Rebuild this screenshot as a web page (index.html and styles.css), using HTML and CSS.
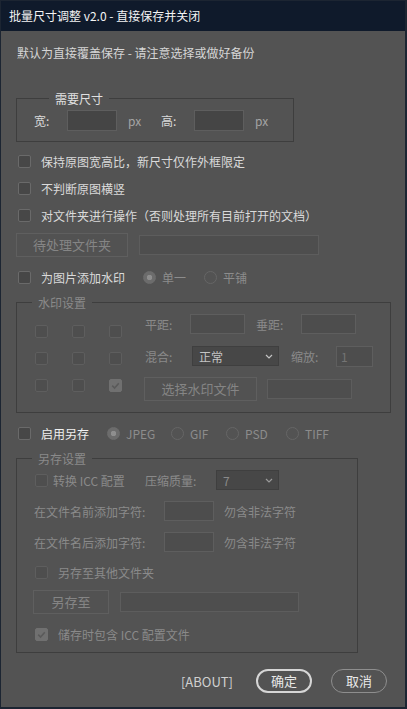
FILE: index.html
```html
<!DOCTYPE html>
<html lang="zh-CN">
<head>
  <meta charset="UTF-8" />
  <title>批量尺寸调整 v2.0</title>
  <link rel="stylesheet" href="styles.css">
</head>
<body>
  <div class="window">
    <div class="titlebar">批量尺寸调整 v2.0 - 直接保存并关闭</div>

    <div class="content">
      <p class="notice">默认为直接覆盖保存 - 请注意选择或做好备份</p>

      <fieldset class="group group-size">
        <legend class="legend-on">需要尺寸</legend>
        <div class="size-row">
          <span class="lbl-size">宽:</span>
          <input class="text-input" type="text">
          <span class="unit">px</span>
          <span class="lbl-size">高:</span>
          <input class="text-input" type="text">
          <span class="unit">px</span>
        </div>
      </fieldset>

      <div class="check-row first">
        <span class="check"></span>
        <span class="check-label">保持原图宽高比，新尺寸仅作外框限定</span>
      </div>
      <div class="check-row">
        <span class="check"></span>
        <span class="check-label">不判断原图横竖</span>
      </div>
      <div class="check-row">
        <span class="check"></span>
        <span class="check-label">对文件夹进行操作（否则处理所有目前打开的文档）</span>
      </div>

      <div class="button-row folder-row">
        <span class="btn btn-folder">待处理文件夹</span>
        <span class="path-field path-folder"></span>
      </div>

      <div class="check-row mark-row">
        <span class="check"></span>
        <span class="check-label">为图片添加水印</span>
        <span class="radio-item item-single"><span class="radio checked"></span>单一</span>
        <span class="radio-item"><span class="radio"></span>平铺</span>
      </div>

      <fieldset class="group group-mark">
        <legend>水印设置</legend>
        <div class="mark-body">
          <div class="pos-grid">
            <span class="check off"></span>
            <span class="check off"></span>
            <span class="check off"></span>
            <span class="check off"></span>
            <span class="check off"></span>
            <span class="check off"></span>
            <span class="check off"></span>
            <span class="check off"></span>
            <span class="check off ticked">
              <svg width="13" height="13" viewBox="0 0 13 13"><polyline points="3.2,6.6 5.6,9 9.8,4.2" fill="none" stroke="#5a5a5a" stroke-width="1.6"/></svg>
            </span>
          </div>
          <div class="mark-opts">
            <div class="opt-row">
              <span class="lbl-opt">平距:</span>
              <span class="field field-gap"></span>
              <span class="lbl-opt lbl-second">垂距:</span>
              <span class="field field-gap"></span>
            </div>
            <div class="opt-row">
              <span class="lbl-opt lbl-blend">混合:</span>
              <span class="select select-blend">正常
                <svg width="8" height="5" viewBox="0 0 8 5"><polyline points="1,1 4,4 7,1" fill="none" stroke="#c4c4c4" stroke-width="1.2"/></svg>
              </span>
              <span class="lbl-opt lbl-scale">缩放:</span>
              <span class="field field-scale">1</span>
            </div>
            <div class="opt-row opt-last">
              <span class="btn btn-mark">选择水印文件</span>
              <span class="path-field path-mark"></span>
            </div>
          </div>
        </div>
      </fieldset>

      <div class="check-row save-row">
        <span class="check"></span>
        <span class="check-label label-bright">启用另存</span>
        <span class="radio-item item-jpeg"><span class="radio checked"></span>JPEG</span>
        <span class="radio-item item-gif"><span class="radio"></span>GIF</span>
        <span class="radio-item item-psd"><span class="radio"></span>PSD</span>
        <span class="radio-item"><span class="radio"></span>TIFF</span>
      </div>

      <fieldset class="group group-save">
        <legend>另存设置</legend>
        <div class="save-body">
          <div class="save-line first">
            <span class="check off"></span>
            <span class="icc-label">转换 ICC 配置</span>
            <span class="lbl-quality">压缩质量:</span>
            <span class="select select-quality">7
              <svg width="8" height="5" viewBox="0 0 8 5"><polyline points="1,1 4,4 7,1" fill="none" stroke="#9a9a9a" stroke-width="1.2"/></svg>
            </span>
          </div>
          <div class="save-line">
            <span class="lbl-affix">在文件名前添加字符:</span>
            <span class="field field-affix"></span>
            <span class="hint">勿含非法字符</span>
          </div>
          <div class="save-line">
            <span class="lbl-affix">在文件名后添加字符:</span>
            <span class="field field-affix"></span>
            <span class="hint">勿含非法字符</span>
          </div>
          <div class="save-line other-row">
            <span class="check off"></span>
            <span class="check-label dim">另存至其他文件夹</span>
          </div>
          <div class="save-line button-line">
            <span class="btn btn-saveto">另存至</span>
            <span class="path-field path-saveto"></span>
          </div>
          <div class="save-line other-row">
            <span class="check off ticked">
              <svg width="13" height="13" viewBox="0 0 13 13"><polyline points="3.2,6.6 5.6,9 9.8,4.2" fill="none" stroke="#5a5a5a" stroke-width="1.6"/></svg>
            </span>
            <span class="check-label dim">储存时包含 ICC 配置文件</span>
          </div>
        </div>
      </fieldset>

      <div class="footer">
        <span class="about">[ABOUT]</span>
        <span class="pill pill-primary">确定</span>
        <span class="pill">取消</span>
      </div>
    </div>
  </div>
</body>
</html>
```

FILE: styles.css
```css
* {
  box-sizing: border-box;
}
body {
  margin: 0;
  background: #535353;
  font-family: "Noto Sans CJK SC", "Noto Sans", sans-serif;
  font-size: 12px;
  color: #dadada;
}
.window {
  width: 407px;
  height: 709px;
  background: #535353;
  border: 1px solid #1c2532;
  border-right-width: 2px;
  border-bottom-width: 2px;
}
.titlebar {
  height: 30px;
  line-height: 30px;
  padding-left: 8px;
  background: #0f1a2b;
  color: #f4f4f4;
}
.content {
  padding-left: 15px;
}
.notice {
  margin: 12px 0 0 1px;
  line-height: 20px;
  color: #d6d6d6;
}

/* group boxes */
.group {
  margin: 0;
  padding: 0;
  min-width: 0;
  border: 1px solid #3e3e3e;
}
.group legend {
  margin-left: 15px;
  padding: 0 6px;
  height: 15px;
  line-height: 15px;
  color: #8a8a8a;
}
.group legend.legend-on {
  color: #e0e0e0;
}
.group-size {
  width: 278px;
  margin-top: 28px;
  padding: 4px 0 10px 17px;
}
.group-mark {
  width: 375px;
  margin-top: 8px;
}
.group-save {
  width: 342px;
  margin-top: 8px;
}

/* size row */
.size-row {
  display: flex;
  align-items: center;
  height: 21px;
}
.lbl-size {
  width: 33px;
  color: #dadada;
}
.text-input {
  width: 50px;
  height: 21px;
  margin: 0;
  padding: 0 4px;
  background: #454545;
  border: 1px solid #5e5e5e;
  border-radius: 0;
  outline: none;
  color: #dadada;
  font: inherit;
}
.unit {
  width: 44px;
  padding-left: 11px;
  color: #a4a4a4;
}

/* checkbox rows */
.check-row {
  display: flex;
  align-items: center;
  height: 20px;
  margin-top: 7px;
  padding-left: 2px;
}
.check-row.first {
  margin-top: 9px;
}
.check {
  flex: none;
  width: 13px;
  height: 13px;
  border: 1px solid #6a6a6a;
  border-radius: 2px;
  background: #474747;
}
.check.off {
  border-color: #5e5e5e;
  background: #4e4e4e;
}
.check.ticked {
  border-color: #707070;
  background: #707070;
}
.check.ticked svg {
  display: block;
  margin: -1px;
}
.check-label {
  margin-left: 10px;
  color: #dadada;
}
.check-label.label-bright {
  color: #f0f0f0;
}
.check-label.dim {
  color: #8a8a8a;
}

/* radios */
.radio-item {
  display: flex;
  align-items: center;
  color: #8c8c8c;
}
.radio {
  flex: none;
  width: 13px;
  height: 13px;
  margin-right: 6px;
  border: 1px solid #666;
  border-radius: 50%;
}
.radio.checked {
  background: radial-gradient(circle, #8e8e8e 0 2.5px, #6c6c6c 3px);
  border-color: #6c6c6c;
}
.mark-row .check-label {
  width: 102px;
}
.item-single {
  width: 61px;
}
.save-row .check-label {
  width: 66px;
}
.item-jpeg {
  width: 64px;
}
.item-gif {
  width: 55px;
}
.item-psd {
  width: 60px;
}

/* disabled buttons and fields */
.button-row {
  display: flex;
  align-items: center;
  height: 24px;
}
.folder-row {
  margin-top: 8px;
}
.btn {
  flex: none;
  height: 24px;
  line-height: 22px;
  text-align: center;
  border: 1px solid #5f5f5f;
  background: #525252;
  color: #858585;
  font-size: 13px;
}
.path-field {
  flex: none;
  height: 20px;
  border: 1px solid #5d5d5d;
  background: #4e4e4e;
}
.btn-folder {
  width: 112px;
}
.path-folder {
  width: 180px;
  margin-left: 11px;
}
.mark-row {
  margin-top: 10px;
}

/* watermark group */
.mark-body {
  display: flex;
  align-items: flex-start;
  padding: 2px 0 11px 18px;
}
.pos-grid {
  display: grid;
  grid-template-columns: repeat(3, 13px);
  grid-auto-rows: 13px;
  column-gap: 24px;
  row-gap: 14px;
  margin: 13px 23px 0 0;
}
.mark-opts {
  display: flex;
  flex-direction: column;
  gap: 8px;
}
.opt-row {
  display: flex;
  align-items: center;
  height: 24px;
}
.opt-row.opt-last {
  margin-top: 1px;
  margin-left: -1px;
}
.lbl-opt {
  width: 45px;
  color: #8a8a8a;
}
.lbl-second {
  width: 45px;
  margin-left: 11px;
}
.lbl-blend {
  width: 47px;
}
.lbl-scale {
  margin-left: 12px;
}
.field {
  flex: none;
  height: 20px;
  border: 1px solid #5e5e5e;
  background: #4d4d4d;
}
.field-gap {
  width: 55px;
}
.field-scale {
  width: 37px;
  height: 21px;
  padding-left: 4px;
  line-height: 19px;
  color: #747474;
}
.select {
  flex: none;
  display: flex;
  align-items: center;
  justify-content: space-between;
  height: 20px;
  padding: 0 5px 0 6px;
  border: 1px solid #3f3f3f;
  background: #474747;
}
.select-blend {
  width: 87px;
  color: #c4c4c4;
}
.btn-mark {
  width: 113px;
}
.path-mark {
  width: 85px;
  margin-left: 10px;
}

.save-row {
  margin-top: 10px;
}

/* save group */
.save-body {
  padding: 4px 0 8px 16px;
}
.save-line {
  display: flex;
  align-items: center;
  height: 20px;
  margin-top: 11px;
  color: #8a8a8a;
}
.save-line.first {
  margin-top: 0;
}
.save-line .check {
  margin-left: 2px;
}
.icc-label {
  width: 92px;
  margin-left: 5px;
}
.lbl-quality {
  width: 71px;
}
.select-quality {
  width: 63px;
  color: #8a8a8a;
}
.lbl-affix {
  width: 130px;
  margin-left: 1px;
}
.field-affix {
  width: 50px;
}
.hint {
  margin-left: 10px;
}
.save-line.other-row {
  margin-top: 10px;
}
.save-line.button-line {
  height: 24px;
  margin-top: 8px;
}
.btn-saveto {
  width: 76px;
}
.path-saveto {
  width: 179px;
  margin-left: 11px;
}

/* footer */
.footer {
  display: flex;
  justify-content: flex-end;
  align-items: center;
  margin-top: 16px;
  padding-right: 18px;
}
.about {
  margin-right: 23px;
  color: #d0d0d0;
  font-size: 13px;
}
.pill {
  width: 56px;
  height: 24px;
  line-height: 22px;
  text-align: center;
  border: 1px solid #8e8e8e;
  border-radius: 12px;
  color: #e8e8e8;
  font-size: 13px;
}
.pill-primary {
  margin-right: 19px;
  border: 2px solid #d6d6d6;
  line-height: 20px;
}
```
